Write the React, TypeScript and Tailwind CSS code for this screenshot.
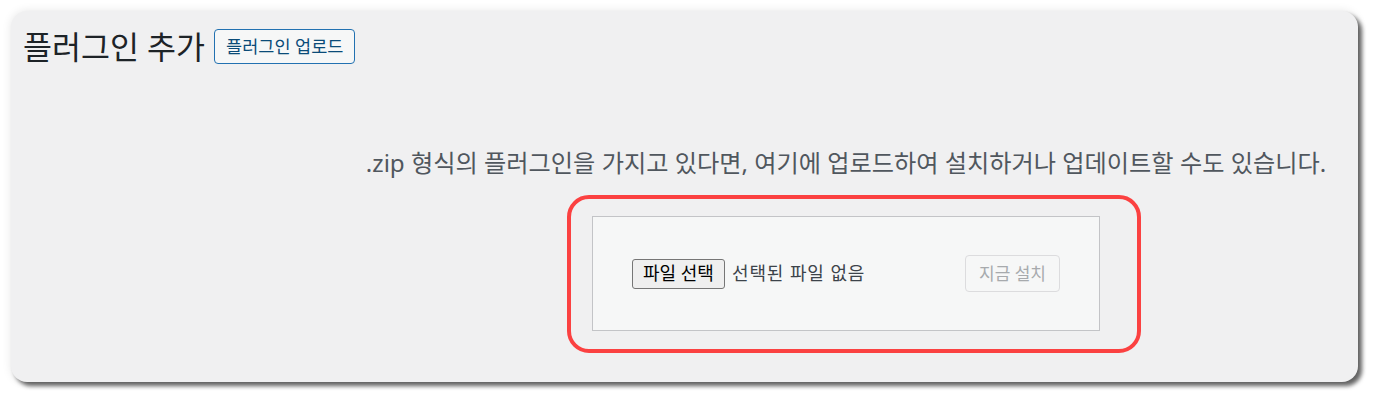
const font = "font-['Noto_Sans','Noto_Sans_CJK_KR',sans-serif]";

export default function App() {
  return (
    <div className={`w-[1377px] h-[401px] bg-white p-[11px] ${font}`}>
      <div className="w-[1347px] h-[371px] rounded-[16px] bg-[#f0f0f1] shadow-[4px_4px_4px_rgba(0,0,0,0.6),0_0_10px_rgba(0,0,0,0.1)] flex flex-col pt-[18px]">
        {/* Header */}
        <div className="flex items-center pl-[12px] gap-[9px]">
          <h1 className="text-[31.5px] leading-[35px] text-[#1d2327] font-normal">플러그인 추가</h1>
          <button className="h-[35px] px-[11px] border-[1.5px] border-[#2271b1] rounded-[4px] bg-[#f6f7f7] text-[17.5px] text-[#0a4b78]">
            플러그인 업로드
          </button>
        </div>

        {/* Upload help */}
        <p className="mt-[83px] pl-[323px] text-center text-[24.2px] leading-[32px] text-[#50575e]">
          .zip 형식의 플러그인을 가지고 있다면, 여기에 업로드하여 설치하거나 업데이트할 수도 있습니다.
        </p>

        {/* Highlighted upload form */}
        <div className="self-start ml-[556px] mt-[16px] border-4 border-[#fb4141] rounded-[22px] pl-[21px] pr-[37px] pt-[17px] pb-[18px]">
          <div className="w-[508px] h-[115px] border border-[#c3c4c7] bg-[#f6f7f7] flex items-center justify-between pl-[39px] pr-[39px]">
            <div className="flex items-center gap-[7px]">
              <button className="h-[30px] px-[10px] border border-[#767676] rounded-[3px] bg-[#efefef] text-[18px] text-black">
                파일 선택
              </button>
              <span className="text-[18px] tracking-[0.05em] text-[#3c434a]">선택된 파일 없음</span>
            </div>
            <button disabled className="h-[37px] w-[95px] border border-[#dcdcde] rounded-[4px] bg-[#f6f7f7] text-[17px] text-[#a7aaad]">
              지금 설치
            </button>
          </div>
        </div>
      </div>
    </div>
  );
}
